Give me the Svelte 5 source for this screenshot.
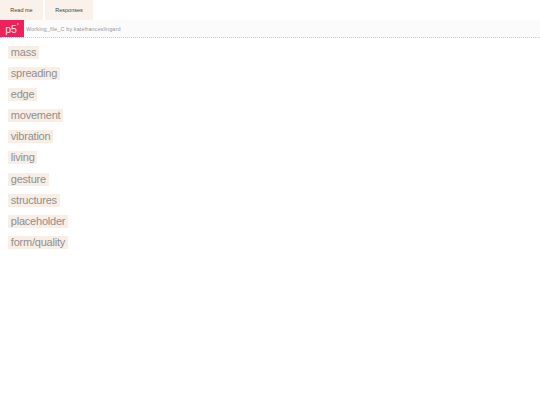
<script>
  const tabs = ['Read me', 'Responses'];
  const words = ['mass','spreading','edge','movement','vibration','living','gesture','structures','placeholder','form/quality'];
</script>

<div class="page">
  <nav class="tabs">
    {#each tabs as t}
      <span class="tab">{t}</span>
    {/each}
  </nav>
  <header class="bar">
    <span class="logo">p5<sup>*</sup></span>
    <span class="title">Working_file_C by katefranceslingard</span>
  </header>
  <main class="list">
    {#each words as w}
      <div class="row"><span class="word">{w}</span></div>
    {/each}
  </main>
</div>

<style>
  :global(body) { margin: 0; background: #fff; }
  .page { font-family: "Liberation Sans", Arial, sans-serif; width: 540px; height: 405px; overflow: hidden; }
  .tabs { display: flex; gap: 2px; height: 20px; }
  .tab { background: #faf1ea; color: #444; font-size: 5.5px; display: flex; align-items: center; justify-content: center; }
  .tab:nth-child(1) { width: 43px; }
  .tab:nth-child(2) { width: 48px; }
  .bar { display: flex; align-items: center; height: 17px; background: #fbfbfb; border-bottom: 1px dotted #cfcfcf; }
  .logo { width: 24px; height: 17px; background: #ed225d; color: #fde3ea; font-size: 10.5px; display: flex; align-items: center; justify-content: center; }
  .logo sup { font-size: 4.5px; line-height: 1; align-self: flex-start; margin-top: 4px; }
  .title { margin-left: 2px; font-size: 5.5px; color: #999; letter-spacing: 0.1px; }
  .list { display: flex; flex-direction: column; gap: 8.1px; padding: 8px 0 0 8px; }
  .row { display: flex; height: 13px; }
  .word { background: #f9eee6; color: #8f8f8f; font-size: 11px; letter-spacing: -0.22px; line-height: 13px; height: 13px; padding: 0 2.8px; }
</style>
